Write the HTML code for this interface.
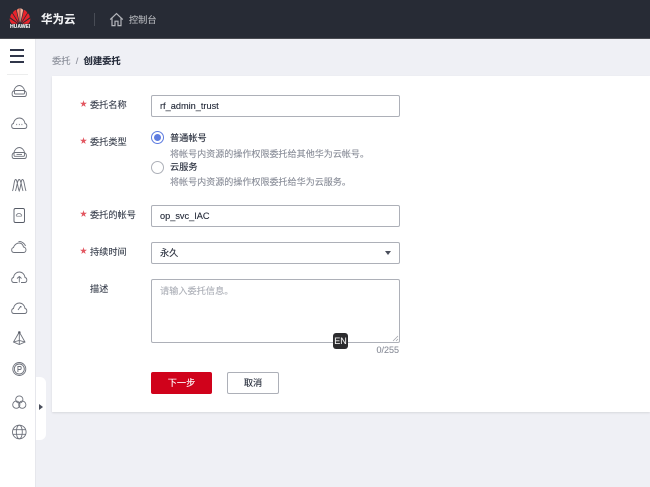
<!DOCTYPE html>
<html lang="zh"><head><meta charset="utf-8"><title>创建委托</title>
<style>
*{box-sizing:border-box}
html,body{margin:0;padding:0}
body{width:650px;height:487px;overflow:hidden;position:relative;background:#eff0f5;font-family:"Liberation Sans","Noto Sans CJK SC",sans-serif;color:#252b3a;-webkit-text-stroke:.12px currentColor}
.a{position:absolute;white-space:nowrap}
.t{font-size:9.2px;line-height:14px}
.inp{position:absolute;left:151px;width:249px;background:#fff;border:1px solid #adb0b8;border-radius:2px;font-size:9.2px;padding-left:8px;color:#252b3a}
.star{color:#e2555f;font-size:7px;line-height:14px;position:absolute;left:80px}
.lb{position:absolute;left:90px;font-size:9.2px;line-height:14px;color:#3a404e;white-space:nowrap}
.hint{position:absolute;left:170px;font-size:9.05px;line-height:13px;color:#8a8e99;white-space:nowrap}
svg{position:absolute;display:block}
.ic{left:10px;width:18px;height:18px;fill:none;stroke:#6d717b;stroke-width:.9}
</style></head><body>
<div class="a" style="left:0;top:0;width:650px;height:39px;background:#272b35;border-bottom:1px solid #4a4c52"></div>
<svg style="left:9px;top:8px;width:22px;height:16px" viewBox="0 0 22 16">
<g fill="#e8242c"><path d="M10.700 15 7.800 2C8.600 1 10 .4 10.700.3Z" fill="#f07f68"/><path d="M11.300 15 14.200 2C13.400 1 12 .4 11.300.3Z" fill="#f6b09c"/><path d="M10 15 3.700 4.700C4.500 3.300 5.800 2.200 7.100 1.900Z"/><path d="M12 15 18.300 4.700C17.500 3.300 16.200 2.200 14.900 1.900Z"/><path d="M9.300 15.200 1.200 9.200C1.400 7.500 2 6 3.100 5.200Z"/><path d="M12.700 15.200 20.800 9.200C20.600 7.500 20 6 18.900 5.200Z"/><path d="M8.700 15.800H2.800C1.600 14.900.7 13 .6 10.400Z"/><path d="M13.300 15.800H19.200C20.400 14.900 21.300 13 21.400 10.400Z"/></g></svg>
<div class="a" style="left:10px;top:24px;font-size:5px;line-height:6px;font-weight:700;color:#f2f2f2;letter-spacing:.05px">HUAWEI</div>
<div class="a" style="left:41px;top:12px;font-size:11.5px;line-height:16px;font-weight:700;color:#f2f3f5">华为云</div>
<div class="a" style="left:94px;top:13px;width:1px;height:13px;background:#484c55"></div>
<svg style="left:109px;top:12px;width:15px;height:15px;fill:none;stroke:#b4b6bb;stroke-width:1.2" viewBox="0 0 15 15"><path d="M1.200 7.600 7.500 1.600 13.800 7.600M3 6.200V13.600H6V9.200H9V13.600H12V6.200"/></svg>
<div class="a" style="left:129px;top:13px;font-size:9.2px;line-height:14px;color:#b4b6bb">控制台</div>

<div class="a" style="left:0;top:39px;width:36px;height:448px;background:#fff;border-right:1px solid #e6e7ec"></div>
<div class="a" style="left:10px;top:49px;width:14px;height:1.500px;background:#30364a"></div>
<div class="a" style="left:10px;top:55px;width:14px;height:1.500px;background:#30364a"></div>
<div class="a" style="left:10px;top:61px;width:14px;height:1.500px;background:#30364a"></div>
<div class="a" style="left:7px;top:74px;width:21px;height:1px;background:#eceded"></div>

<svg class="ic" style="top:82px" viewBox="0 0 18 18"><path d="M4 14.500C1.500 14.500 1.500 9.500 3.800 9 4.500 5.500 7 3.500 9.300 3.500S14 5.500 14.700 9C17 9.500 17 14.500 14.500 14.500Z"/><rect x="4.500" y="8.500" width="10" height="3.500" rx="1"/></svg>
<svg class="ic" style="top:114px" viewBox="0 0 18 18"><path d="M4 14.500C1 14.500 1 10 3.500 9.500 4 6 6.500 4 9.300 4S14.500 6 15 9.500C17.500 10 17.500 14.500 14.500 14.500Z"/><path d="M6.300 10.500H7.100M8.900 10.500H9.700M11.500 10.500H12.300" stroke-width="1.200"/></svg>
<svg class="ic" style="top:144px" viewBox="0 0 18 18"><path d="M4 14.500C1.500 14.500 1.500 9.500 3.800 9 4.500 5.500 7 3.500 9.300 3.500S14 5.500 14.700 9C17 9.500 17 14.500 14.500 14.500Z"/><rect x="4" y="8.500" width="10.500" height="3.800" rx="1"/><path d="M6.500 10.400H12"/></svg>
<svg class="ic" style="top:176px" viewBox="0 0 18 18"><path d="M2.500 15C4 11 4 3.500 5.700 3.500S7.500 11 9.200 15C11 11 10.800 3.500 12.500 3.500S14.500 11 16 15M5.500 15C7 10 7.500 3.500 9.200 3.500S11.500 10 13 15"/></svg>
<svg class="ic" style="top:206px" viewBox="0 0 18 18"><rect x="4" y="2.500" width="10.500" height="14" rx="1.500" stroke="#565b66"/><path d="M6.800 10.200C6 10.200 6 8.700 7 8.500 7.400 7.200 10.600 7.200 11 8.500 12 8.700 12 10.200 11.200 10.200Z" stroke-width=".7"/></svg>
<svg class="ic" style="top:238px" viewBox="0 0 18 18"><path d="M4 14.500C1 14.500 1 10 3.500 9.600 4.500 6 7.500 5 9 5 11.500 5 13 7 13.500 9 16.800 9.300 16.800 14.500 13.500 14.500Z"/><path d="M8.500 3.600C11 3 14.500 5 15.500 8"/></svg>
<svg class="ic" style="top:268px" viewBox="0 0 18 18"><path d="M4 14.500C1 14.500 1 10 3.500 9.500 4 6 6.500 4 9.300 4S14.500 6 15 9.500C17.500 10 17.500 14.500 14.500 14.500H11M7.500 14.500H4M9.300 14.500V8.500M7 10.500 9.300 8.500 11.500 10.500"/></svg>
<svg class="ic" style="top:299px" viewBox="0 0 18 18"><path d="M4 14.500C1 14.500 1 10 3.500 9.500 4 6 6.500 4 9.300 4S14.500 6 15 9.500C17.500 10 17.500 14.500 14.500 14.500Z"/><path d="M8 11 10.500 7.500M10 7.500H11V8.500"/></svg>
<svg class="ic" style="top:329px" viewBox="0 0 18 18"><path d="M9.300 3 3.500 13 9.300 15.500 15 13ZM9.300 3V15.500M3.500 13 9.300 11.500 15 13"/><circle cx="9.300" cy="3.500" r=".9" fill="#3c4049"/></svg>
<svg class="ic" style="top:360px" viewBox="0 0 18 18"><circle cx="9.300" cy="9" r="6.500"/><circle cx="9.300" cy="9" r="5"/><path d="M7.900 12V6.500H10.100C11.600 6.500 11.600 9.500 10.100 9.500H7.900"/></svg>
<svg class="ic" style="top:393px" viewBox="0 0 18 18"><circle cx="9.300" cy="6.500" r="3.600"/><circle cx="6.300" cy="11.700" r="3.600"/><circle cx="12.300" cy="11.700" r="3.600"/></svg>
<svg class="ic" style="top:423px" viewBox="0 0 18 18"><circle cx="9.300" cy="9" r="6.800"/><ellipse cx="9.300" cy="9" rx="3" ry="6.800"/><path d="M2.800 6.700H15.800M2.800 11.300H15.800"/></svg>

<div class="a" style="left:36px;top:377px;width:10px;height:63px;background:#fff;border-radius:0 6px 6px 0"></div>
<div class="a" style="left:39px;top:404px;border-left:4px solid #4a4f5c;border-top:3px solid transparent;border-bottom:3px solid transparent"></div>

<div class="a" style="left:52px;top:54px;font-size:9.3px;line-height:14px;color:#8a8e99">委托&nbsp;&nbsp;/&nbsp;&nbsp;<span style="color:#252b3a;font-weight:700">创建委托</span></div>

<div class="a" style="left:52px;top:76px;width:598px;height:336px;background:#fff;box-shadow:0 1px 2px rgba(0,0,0,.1)"></div>

<span class="star" style="top:98px">★</span><div class="lb" style="top:98px">委托名称</div>
<div class="inp" style="top:95px;height:22px;line-height:21px">rf_admin_trust</div>

<span class="star" style="top:135px">★</span><div class="lb" style="top:135px">委托类型</div>
<div class="a" style="left:151px;top:131px;width:13px;height:13px;border-radius:50%;border:1px solid #5e7ce0;background:#fff"></div>
<div class="a" style="left:154px;top:134px;width:7px;height:7px;border-radius:50%;background:#5e7ce0"></div>
<div class="a t" style="left:170px;top:131px">普通帐号</div>
<div class="hint" style="top:148px">将帐号内资源的操作权限委托给其他华为云帐号。</div>
<div class="a" style="left:151px;top:161px;width:13px;height:13px;border-radius:50%;border:1px solid #adb0b8;background:#fff"></div>
<div class="a t" style="left:170px;top:160px">云服务</div>
<div class="hint" style="top:176px">将帐号内资源的操作权限委托给华为云服务。</div>

<span class="star" style="top:208px">★</span><div class="lb" style="top:208px">委托的帐号</div>
<div class="inp" style="top:205px;height:22px;line-height:21px">op_svc_IAC</div>

<span class="star" style="top:245px">★</span><div class="lb" style="top:245px">持续时间</div>
<div class="inp" style="top:242px;height:22px;line-height:21px">永久</div>
<div class="a" style="left:385px;top:251px;border-top:4px solid #4a4f5c;border-left:3.500px solid transparent;border-right:3.500px solid transparent"></div>

<div class="lb" style="top:282px">描述</div>
<div class="inp" style="top:279px;height:64px;line-height:14px;padding-top:4px;color:#adb0b8">请输入委托信息。</div>
<svg style="left:392px;top:335px;width:7px;height:7px;stroke:#9a9da5;stroke-width:.7" viewBox="0 0 7 7"><path d="M1 6 6 1M4 6 6 4"/></svg>
<div class="a" style="left:333px;top:333px;width:15px;height:16px;background:#2c2c2e;border-radius:3px;color:#eee;font-size:9px;line-height:16px;text-align:center">EN</div>
<div class="a" style="left:375px;top:344px;width:24px;text-align:right;font-size:9px;line-height:13px;color:#8a8e99">0/255</div>

<div class="a" style="left:151px;top:372px;width:61px;height:22px;background:#d0021b;border-radius:2px;color:#fff;font-size:9.2px;line-height:23px;text-align:center">下一步</div>
<div class="a" style="left:227px;top:372px;width:52px;height:22px;background:#fff;border:1px solid #adb0b8;border-radius:2px;color:#252b3a;font-size:9.2px;line-height:21px;text-align:center">取消</div>
</body></html>
